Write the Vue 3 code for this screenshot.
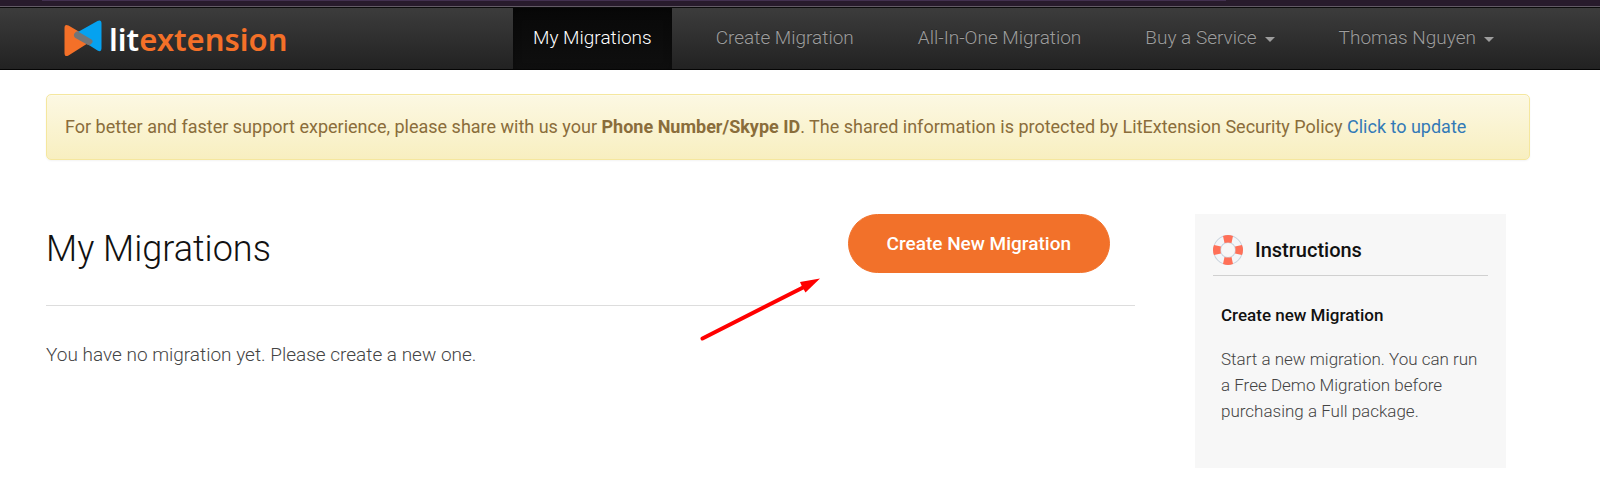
<script setup>
const navItems = [
  { label: 'My Migrations', active: true },
  { label: 'Create Migration' },
  { label: 'All-In-One Migration' },
  { label: 'Buy a Service', menu: true },
  { label: 'Thomas Nguyen', menu: true },
]
</script>

<template>
  <div class="page">
    <div class="browser-strip"><div class="strip-line"></div></div>

    <header class="navbar">
      <a class="brand" href="#" aria-label="litextension">
        <svg class="brand-mark" viewBox="0 0 38 38" aria-hidden="true">
          <path d="M0.500 8 Q0.500 3.500 4.500 5.500 L25 17.500 Q29 20 25 22.500 L4.500 35.500 Q0.500 37.500 0.500 33 Z" fill="#f47028" />
          <path d="M37.500 3.500 Q37.500 -0.500 33.500 1 L13 12.500 Q9 15 13 17.500 L33.500 30.500 Q37.500 32.500 37.500 28.500 Z" fill="#05a2f0" />
          <path d="M14 11.500 L27.500 19.500 Q29.500 21 28 23 L26 25 Q25 25.500 23.500 24.800 L11 17.800 Q9.300 16.500 10 14 L12 11.800 Q13 11 14 11.500 Z" fill="#737577" />
        </svg>
        <span class="wordmark"><span class="lit">lit</span>extension</span>
      </a>
      <nav class="nav">
        <template v-for="item in navItems" :key="item.label">
          <button v-if="item.menu" type="button" class="nav-item" aria-haspopup="true">
            {{ item.label }}<span class="caret"></span>
          </button>
          <a v-else href="#" class="nav-item" :class="{ active: item.active }">{{ item.label }}</a>
        </template>
      </nav>
    </header>

    <div class="container">
      <div class="alert" role="alert">
        For better and faster support experience, please share with us your
        <strong>Phone Number/Skype ID</strong>. The shared information is protected by LitExtension Security Policy
        <a href="#">Click to update</a>
      </div>

      <div class="columns">
        <main class="content">
          <div class="heading">
            <h1>My Migrations</h1>
            <button type="button" class="create">Create New Migration</button>
          </div>
          <p class="empty">You have no migration yet. Please create a new one.</p>
          <svg class="arrow" viewBox="0 0 122 66" aria-hidden="true">
            <path d="M3.500 61.500 L106 9.500" stroke="#f00" stroke-width="4" stroke-linecap="round" />
            <path d="M121 1.500 L101 5 L103 9.500 L106.500 15.500 Z" fill="#f00" />
          </svg>
        </main>

        <aside class="instructions">
          <h2>
            <svg class="buoy" viewBox="0 0 30 30" aria-hidden="true">
              <circle cx="15" cy="15" r="11" fill="none" stroke="#c9d2dc" stroke-width="8" />
              <circle cx="15" cy="15" r="11" fill="none" stroke="#f4f6f9" stroke-width="6" />
              <path d="M10 1 Q15 -1 20 1 L18.500 8 Q15 7 11.500 8 Z M10 29 Q15 31 20 29 L18.500 22 Q15 23 11.500 22 Z M1 10 Q-1 15 1 20 L8 18.500 Q7 15 8 11.500 Z M29 10 Q31 15 29 20 L22 18.500 Q23 15 22 11.500 Z" fill="#ff7058" />
            </svg>
            Instructions
          </h2>
          <div class="step">
            <h3>Create new Migration</h3>
            <p>Start a new migration. You can run a Free Demo Migration before purchasing a Full package.</p>
          </div>
        </aside>
      </div>
    </div>
  </div>
</template>

<style>
body {
  margin: 0;
  background: #fff;
}
</style>

<style scoped>
.page {
  font-family: Roboto, "Liberation Sans", sans-serif;
  color: #111;
}
.page * {
  box-sizing: border-box;
}
.browser-strip {
  height: 7px;
  background: #281b2c;
  border-bottom: 1px solid #625a65;
}
.strip-line {
  height: 1px;
  margin-left: 42px;
  width: 74%;
  background: #42304f;
}
.navbar {
  display: flex;
  justify-content: space-between;
  height: 63px;
  padding: 0 86px 0 64px;
  border-top: 1px solid #0b0b0b;
  border-bottom: 1px solid #050505;
  background: linear-gradient(#3c3c3c, #222);
}
.brand {
  display: flex;
  align-items: center;
  gap: 7px;
  text-decoration: none;
}
.brand-mark {
  width: 38px;
  height: 38px;
}
.wordmark {
  font: 600 31px/40px "Noto Sans", sans-serif;
  color: #f47028;
}
.lit {
  color: #fff;
}
.nav {
  display: flex;
  gap: 24px;
}
.nav-item {
  display: flex;
  align-items: center;
  padding: 0 20px 2px;
  border: 0;
  background: none;
  font: 300 19px/28px Roboto, sans-serif;
  color: #9d9d9d;
  text-decoration: none;
  text-shadow: 0 -1px 0 rgba(0, 0, 0, 0.25);
  white-space: nowrap;
}
.nav-item.active {
  color: #fff;
  background: linear-gradient(#080808, #0f0f0f);
  box-shadow: inset 0 3px 9px rgba(0, 0, 0, 0.25);
}
.caret {
  margin: 3px 0 0 8px;
  border: 5px solid transparent;
  border-top-color: currentColor;
  border-bottom: 0;
}
.container {
  padding: 24px 70px 20px 46px;
}
.alert {
  padding: 18px;
  border: 1px solid #f5e79e;
  border-radius: 5px;
  background: linear-gradient(#fcf8e3, #f8efc0);
  box-shadow: inset 0 1px 0 rgba(255, 255, 255, 0.25), 0 1px 2px rgba(0, 0, 0, 0.05);
  font-size: 18px;
  line-height: 28px;
  color: #8a6d3b;
}
.alert a {
  color: #337ab7;
  text-decoration: none;
}
.columns {
  display: flex;
  align-items: flex-start;
  gap: 60px;
  margin: 54px 24px 0 0;
}
.content {
  position: relative;
  flex: 1;
}
.heading {
  display: flex;
  justify-content: space-between;
  align-items: flex-start;
  padding-right: 25px;
  padding-bottom: 32px;
  border-bottom: 1px solid #ddd;
}
h1 {
  margin: 13px 0 0;
  font-size: 36px;
  font-weight: 300;
  line-height: 44px;
}
.create {
  height: 59px;
  padding: 0 38px;
  border: 1px solid #f2712a;
  border-radius: 30px;
  background: #f2712a;
  font: 500 19px/28px Roboto, sans-serif;
  color: #fff;
}
.empty {
  margin: 35px 0 0;
  font-size: 19px;
  font-weight: 300;
  line-height: 28px;
  color: #444;
}
.arrow {
  position: absolute;
  top: 63px;
  right: 314px;
  width: 122px;
  height: 66px;
}
.instructions {
  width: 311px;
  padding: 21px 18px 44px;
  background: #f7f7f7;
}
h2 {
  display: flex;
  align-items: center;
  gap: 12px;
  margin: 0;
  padding-bottom: 10px;
  border-bottom: 1px solid #d0d0d0;
  font-size: 20px;
  font-weight: 500;
  line-height: 30px;
}
.buoy {
  width: 30px;
  height: 30px;
}
.step {
  padding: 26px 8px 0;
}
h3 {
  margin: 0;
  font-size: 17px;
  font-weight: 500;
  line-height: 26px;
}
.step p {
  margin: 18px 0 0;
  font-size: 17px;
  font-weight: 300;
  line-height: 26px;
  color: #444;
}
</style>
